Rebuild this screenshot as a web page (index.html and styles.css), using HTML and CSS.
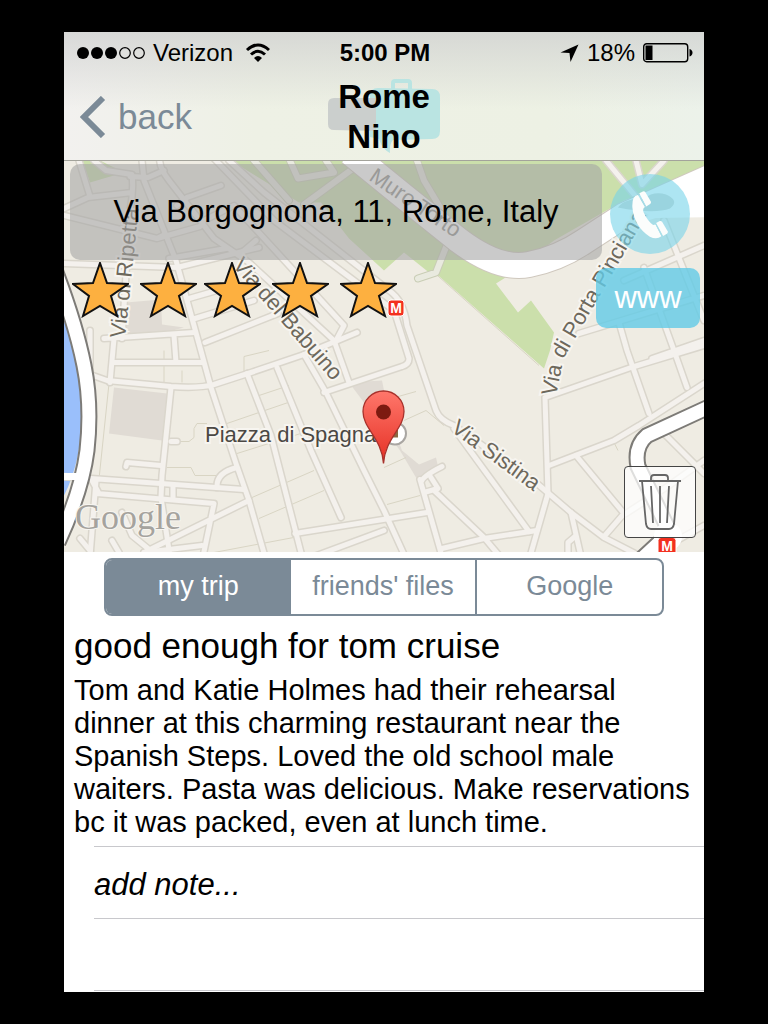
FILE: index.html
```html
<!DOCTYPE html>
<html lang="en">
<head>
    <meta charset="utf-8">
    <meta name="viewport" content="width=device-width, initial-scale=1">
    <title>Rome - Nino</title>
    <link rel="stylesheet" href="styles.css">
</head>
<body>
    <main class="phone">
        <header class="header">
            <div class="status-bar">
                <div class="status-left">
                    <svg width="68" height="14" viewBox="0 0 68 14" aria-hidden="true">
                        <circle cx="6" cy="7" r="6"/>
                        <circle cx="20" cy="7" r="6"/>
                        <circle cx="34" cy="7" r="6"/>
                        <circle cx="48" cy="7" r="5.3" fill="none" stroke="#000" stroke-width="1.2"/>
                        <circle cx="62" cy="7" r="5.3" fill="none" stroke="#000" stroke-width="1.2"/>
                    </svg>
                    <span>Verizon</span>
                    <svg class="wifi" width="26" height="20" viewBox="0 0 26 20" aria-hidden="true">
                        <g fill="none" stroke="#000" stroke-width="3">
                            <path d="M2 7 Q13 -3 24 7"/>
                            <path d="M6 11.5 Q13 5 20 11.5"/>
                        </g>
                        <path d="M9 15 Q13 11 17 15 L13 19 Z"/>
                    </svg>
                </div>
                <time class="clock">5:00 PM</time>
                <div class="status-right">
                    <svg width="19" height="19" viewBox="0 0 19 19" aria-hidden="true">
                        <path d="M18.500 .5 L10.500 18 L9.500 9 L.5 8.500 Z"/>
                    </svg>
                    <span>18%</span>
                    <svg width="50" height="20" viewBox="0 0 50 20" aria-hidden="true">
                        <rect x=".7" y=".7" width="44" height="18" rx="3" fill="none" stroke="#000" stroke-width="1.400"/>
                        <rect x="2.500" y="2.500" width="7" height="14.500"/>
                        <path d="M46.500 6 Q49.500 7 49.500 9.700 Q49.500 12.500 46.500 13.500 Z"/>
                    </svg>
                </div>
            </div>
            <nav class="nav-bar">
                <button type="button" class="back">
                    <svg width="26" height="42" viewBox="0 0 26 42" aria-hidden="true">
                        <path d="M23 2 L4 21 L23 40" fill="none" stroke="#7b8a97" stroke-width="6"/>
                    </svg>
                    back
                </button>
                <h1 class="title">
                    <svg class="title-logo" width="112" height="76" viewBox="0 0 112 76" aria-hidden="true">
                        <path d="M65 12 V4 Q65 2 67 2 H80 Q82 2 82 4 V12" fill="none" stroke="#bae4e2" stroke-width="4"/>
                        <path d="M50 9 L104 10 Q112 10 112 18 V52 Q112 60 104 60 L65 61 Q61 65 62 74 Q54 70 51 60 L42 58 V17 Q42 9 50 9 Z" fill="#bae4e2"/>
                        <path d="M6 19 H48 V52 L6 51 Q0 51 0 45 V25 Q0 19 6 19 Z" fill="#cbcfcd"/>
                    </svg>
                    <span class="title-text">Rome<br>Nino</span>
                </h1>
            </nav>
        </header>

        <section class="map" aria-label="Map">
            <svg class="map-canvas" viewBox="0 0 640 392" preserveAspectRatio="xMidYMid slice">
                <defs>
                    <linearGradient id="pin-fill" x1="0" y1="0" x2="0" y2="1">
                        <stop offset="0" stop-color="#ff776b"/>
                        <stop offset="1" stop-color="#e52f24"/>
                    </linearGradient>
                    <path id="star" d="M28 1 L35 21 L56 22 L39 34 L45 54 L28 44 L11 54 L17 34 L1 22 L21 21 Z"/>
                    <g id="streets">
                        <path d="M0 48 L24 37 L68 32 M15 0 L26 36 M30 0 L42 10 L68 14 Q70 30 66 50 L58 178"/>
                        <path d="M78 0 L80 20 L112 100 L130 165 L147 227 L172 303 L185 340 L201 396"/>
                        <path d="M66 16 L84 17 L100 10 M96 -4 Q94 6 105 20 L150 78 L185 102 L270 180 L285 222"/>
                        <path d="M0 55 L93 78 L101 74 M93 78 L136 66 M0 103 L113 107 L195 87 M123 37 L157 25 M113 45 L123 37"/>
                        <path d="M140 60 L170 45 L280 165 L271 182 M105 98 L162 88 M178 92 L192 80"/>
                        <path d="M165 0 L200 32 L325 130 Q340 140 343 165 L372 250 Q376 260 390 265 L473 323 L507 352 L540 377 L575 395"/>
                        <path d="M150 -2 L210 60 L330 150 L345 198 Q345 204 338 206 L260 232"/>
                        <path d="M40 178 L130 172 M50 178 L46 222 M50 202 L138 202 M110 175 L112 202"/>
                        <path d="M26 170 L26 214 L43 220 L107 226 Q135 228 150 224 L187 212 L240 194 L293 172"/>
                        <path d="M125 138 L160 128 M131 158 L190 140 M141 182 L214 153"/>
                        <path d="M107 227 L98 315 L97 337 L106 396 M109 325 V337 M107 281 H113"/>
                        <path d="M183 213 L207 275 L238 396 M213 207 L247 290 L277 357 M240 194 L262 232 L300 310 L320 350 L341 396"/>
                        <path d="M-2 316 L27 318 L180 329 M33 333 L150 343 L139 396 M185 340 L80 392 M32 320 L26 396 M28 320 L35 333"/>
                        <path d="M62 306 L63 302 L97 305 M153 327 Q152 312 173 307 M55 392 L48 380 M84 388 L68 375 L58 352 M138 385 L80 392 M16 378 L26 390"/>
                        <path d="M231 373 L363 352 M250 396 L320 370"/>
                        <path d="M390 268 L465 371 M481 237 L484 333 L466 396 M481 237 L567 207 L640 185"/>
                        <path d="M485 305 L550 280 L575 265 L640 223 M555 162 L563 190 L585 253 M580 107 L610 190 L623 227"/>
                        <path d="M515 173 L640 135 M560 120 L640 85 M588 198 L640 180 M600 60 L640 160 M542 0 L575 40 M572 0 L578 24 L600 0"/>
                        <path d="M512 295 L560 353 L541 375 M600 273 L640 313 M507 352 L517 396 M562 353 L605 325 L640 300 M604 385 L640 365"/>
                        <path d="M356 319 L378 396 M370 330 L420 377 L436 396 M378 388 L420 378 L473 370 M357 322 Q358 316 378 306 M360 332 L374 328 L367 317"/>
                        <path d="M504 393 V382 L511 376"/>
                    </g>
                    <g id="park-paths">
                        <path d="M190 0 L225 40 M225 -2 L234 18 L270 12 L262 0 M240 44 L300 0 M353 0 L360 20 L390 70 M383 84 L372 112 L354 118"/>
                    </g>
                    <g id="highways">
                        <path d="M-8 112 Q12 165 20 205 Q28 245 23 290 Q18 330 -6 382"/>
                        <path d="M646 246 L583 275 Q570 286 574 306 L606 372 L578 398"/>
                    </g>
                </defs>
                <rect width="640" height="392" fill="#efece3"/>
                <!-- river, parks and blocks -->
                <path d="M0 160 Q15 200 18 250 Q18 300 0 335 Z" fill="#9abffb"/>
                <g fill="#cbdfab">
                    <path d="M18 0 H36 L60 12 L26 22 Z"/>
                    <path d="M167 0 H640 V10 L560 40 L490 80 L440 118 L432 123 L454 152 L467 140 L490 172 L486 190 L480 208 L372 113 L365 112 L340 92 L320 110 L285 78 L257 42 L235 42 Z"/>
                </g>
                <g fill="#e0dbd4">
                    <path d="M62 142 L97 139 L98 164 L120 167 L97 173 L60 175 Z"/>
                    <path d="M50 227 L103 233 L98 280 L45 273 Z"/>
                    <path d="M285 222 L318 220 L325 255 L338 290 L355 304 L372 297 L374 306 L362 318 L352 317 L336 290 Z"/>
                </g>
                <g fill="none" stroke="#d9d5c4">
                    <path d="M100 190 V222 M118 210 V222 M180 212 V196 L205 190 M160 264 L230 240 M173 293 L240 272 M195 235 L225 225 M143 263 H133 L130 268 V277 L125 281 H115 M103 307 H127 L131 315 H152 M188 337 L250 310 M195 358 L260 330 M45 223 L34 328 M320 307 L342 297 M323 344 L356 335 M320 240 L352 231 M340 260 L362 250 L380 265 M550 282 L554 290 M370 112 L475 205 M150 392 L235 376"/>
                </g>
                <!-- streets: casing first, then the road itself -->
                <g fill="none" stroke-linecap="round" stroke-linejoin="round">
                    <use href="#park-paths" stroke="#c9cdb5" stroke-width="8"/>
                    <use href="#park-paths" stroke="#e9eadf" stroke-width="6"/>
                    <use href="#streets" stroke="#dad6cc" stroke-width="8"/>
                    <use href="#streets" stroke="#f4f1ed" stroke-width="5"/>
                </g>
                <path d="M286 -8 L340 36 L395 80 Q435 110 465 104 Q495 98 520 81 L560 55 L650 15" fill="none" stroke="#cfc8be" stroke-width="27"/>
                <path d="M286 -8 L340 36 L395 80 Q435 110 465 104 Q495 98 520 81 L560 55 L650 15 V44 L590 45 L560 55" fill="none" stroke="#fff" stroke-width="25"/>
                <path d="M554 47 Q560 38 580 38 Q590 30 602 34 Q616 40 606 48 Q590 54 554 47 Z" fill="#cfd4cf"/>
                <g fill="none">
                    <use href="#highways" stroke="#7d7b77" stroke-width="17"/>
                    <use href="#highways" stroke="#fff" stroke-width="13"/>
                </g>
                <circle cx="604" cy="376" r="14" fill="#fff"/>
                <path d="M-2 316 H22" stroke="#fff" stroke-width="7"/>
                <!-- street names -->
                <g class="street-name">
                    <text transform="translate(61 178) rotate(-84)">Via di Ripetta</text>
                    <text transform="translate(168 105) rotate(49)">Via del Babuino</text>
                    <text class="highway-name" transform="translate(304 19) rotate(34)">Muro Torto</text>
                    <text transform="translate(492 236) rotate(-79)">Via</text>
                    <text transform="translate(499 199) rotate(-60)">di Porta Pinciana</text>
                    <text transform="translate(386 270) rotate(36)">Via Sistina</text>
                </g>
                <circle cx="331" cy="273" r="11" fill="#fff" stroke="#a9a6a2" stroke-width="2"/>
                <rect x="326" y="268" width="8" height="9" fill="#8a6a43"/>
                <text class="place-name" x="141" y="281">Piazza di Spagna</text>
                <text class="map-brand" x="11" y="368">Google</text>
                <path d="M319.500 303 C318 278 299 268 299 251 A20.500 20.500 0 0 1 340 251 C340 268 321 278 319.500 303 Z" fill="url(#pin-fill)" stroke="#a8322c" stroke-width="1.300"/>
                <circle cx="319.500" cy="251.500" r="7.500" fill="#7d1a10"/>
                <g class="metro">
                    <rect x="594" y="377" width="18" height="18" rx="3"/>
                    <text x="603" y="390">M</text>
                </g>
            </svg>

            <div class="map-overlay">
                <div class="address-row">
                    <address class="address">Via Borgognona, 11, Rome, Italy</address>
                    <button type="button" class="call" aria-label="Call">
                        <svg width="37" height="49" viewBox="98 82 112 148" aria-hidden="true">
                            <g fill="#fbfdfc">
                                <path d="M116 97 L137 133 Q129 138 133 149 Q144 174 162 188 L169 186 L187 222 Q172 234 152 223 Q104 192 99 133 Q98 98 116 97 Z"/>
                                <path d="M120 92 L131 86 Q135 84 138 88 L155 117 Q157 121 153 124 L141 132 Z"/>
                                <path d="M171 182 L182 176 Q186 174 189 178 L206 207 Q208 211 204 214 L192 221 Z"/>
                            </g>
                            <path d="M118 93 L140 134 M169 183 L190 223" stroke="#a9dfea" stroke-width="3"/>
                        </svg>
                    </button>
                </div>
                <div class="rating-row">
                    <div class="stars" role="img" aria-label="5 stars">
                        <svg class="star" width="57" height="56"><use href="#star"/></svg>
                        <svg class="star" width="57" height="56"><use href="#star"/></svg>
                        <svg class="star star-middle" width="57" height="56"><use href="#star"/></svg>
                        <svg class="star" width="57" height="56"><use href="#star"/></svg>
                        <svg class="star" width="57" height="56"><use href="#star"/></svg>
                        <svg class="metro metro-badge" width="18" height="18" viewBox="0 0 18 18">
                            <rect x="1" y="1" width="16" height="16" rx="3"/>
                            <text x="9" y="14">M</text>
                        </svg>
                    </div>
                    <a href="#" class="website">www</a>
                </div>
                <button type="button" class="delete" aria-label="Delete">
                    <svg width="42" height="58" viewBox="0 0 42 58" fill="none" stroke="#666" stroke-width="1.800" aria-hidden="true">
                        <path d="M0 8 H42 M3 8 L7 51 Q8 56 12 56 H30 Q34 56 35 51 L39 8"/>
                        <path d="M12 8 V5 Q12 2 15 2 H26 Q29 2 29 5 V8"/>
                        <path d="M12 13 L14 50 M21 13 V50 M30 13 L28 50"/>
                    </svg>
                </button>
            </div>
        </section>

        <div class="tabs" role="tablist">
            <button type="button" class="tab active" role="tab" aria-selected="true">my trip</button>
            <button type="button" class="tab" role="tab" aria-selected="false">friends' files</button>
            <button type="button" class="tab" role="tab" aria-selected="false">Google</button>
        </div>

        <article class="review">
            <h2 class="review-title">good enough for tom cruise</h2>
            <p class="review-text">Tom and Katie Holmes had their rehearsal dinner at this charming restaurant near the Spanish Steps. Loved the old school male waiters. Pasta was delicious. Make reservations bc it was packed, even at lunch time.</p>
        </article>

        <ul class="notes">
            <li class="note"><input type="text" class="note-input" placeholder="add note..." aria-label="Add note"></li>
            <li class="note"></li>
            <li class="note note-last"></li>
        </ul>
    </main>
</body>
</html>
```
FILE: styles.css
```css
* {
    box-sizing: border-box;
}

body {
    margin: 0;
    padding: 32px 64px;
    min-height: 100vh;
    display: flex;
    background-color: #000;
    color: #000;
    font-family: "Liberation Sans", Arial, sans-serif;
}

button {
    padding: 0;
    border: none;
    background: none;
    font-family: inherit;
    cursor: pointer;
}

.phone {
    flex: 1;
    min-width: 0;
    display: flex;
    flex-direction: column;
    background-color: #fff;
}

/* Header */
.header {
    border-bottom: 1px solid #a3a39b;
    background: linear-gradient(rgba(205, 206, 206, 0.7), rgba(240, 240, 236, 0) 60%),
        linear-gradient(90deg, #f2f1ef, #eef1e5 30%, #edf1e4 75%, #ecf2ea);
}

.status-bar {
    display: grid;
    grid-template-columns: 1fr auto 1fr;
    align-items: center;
    height: 42px;
    padding: 0 11px 0 13px;
    font-size: 24px;
}

.status-left,
.status-right {
    display: flex;
    align-items: center;
    gap: 8px;
}

.wifi {
    margin-left: 4px;
}

.status-right {
    justify-content: flex-end;
}

.clock {
    font-weight: bold;
}

.nav-bar {
    display: grid;
    grid-template-columns: 1fr auto 1fr;
    align-items: center;
    height: 86px;
    padding: 0 16px;
}

.back {
    display: flex;
    align-items: center;
    gap: 12px;
    color: #7b8a97;
    font-size: 35px;
}

.title {
    position: relative;
    margin: 0;
    font-size: 33px;
    line-height: 40px;
    text-align: center;
}

.title-logo {
    position: absolute;
    top: 2px;
    left: 50%;
    transform: translateX(-50%);
}

.title-text {
    position: relative;
}

/* Map */
.map {
    position: relative;
    height: 391px;
    overflow: hidden;
}

.map-canvas {
    display: block;
    width: 100%;
    height: 100%;
}

.street-name {
    fill: #6d685c;
    stroke: #f7f5f0;
    stroke-width: 4px;
    paint-order: stroke;
    font-size: 22px;
}

.highway-name {
    fill: #8d8d89;
    stroke: none;
}

.place-name {
    fill: #4b4844;
    stroke: #f7f5f0;
    stroke-width: 4px;
    paint-order: stroke;
    font-size: 22px;
}

.map-brand {
    fill: #a5a39e;
    stroke: #f7f5f0;
    stroke-width: 2px;
    paint-order: stroke;
    font-family: "Liberation Serif", "Times New Roman", serif;
    font-size: 36px;
}

.metro rect {
    fill: #f3301f;
    stroke: #fff;
    stroke-width: 1px;
}

.metro text {
    fill: #fff;
    font-size: 14px;
    font-weight: bold;
    text-anchor: middle;
}

.map-overlay {
    position: absolute;
    inset: 0;
    display: flex;
    flex-direction: column;
    padding-top: 3px;
}

.address-row {
    display: flex;
    align-items: center;
    gap: 8px;
    padding: 0 14px 0 6px;
}

.address {
    flex: 1;
    padding: 24px 12px;
    border-radius: 10px;
    background-color: rgba(163, 163, 163, 0.58);
    font-size: 31px;
    font-style: normal;
    line-height: 48px;
    text-align: center;
}

.call {
    display: flex;
    align-items: center;
    justify-content: center;
    width: 80px;
    height: 80px;
    margin-top: 4px;
    border-radius: 50%;
    background-color: rgba(118, 211, 234, 0.6);
}

.rating-row {
    display: flex;
    justify-content: space-between;
    padding: 2px 4px 0 8px;
}

.stars {
    position: relative;
    display: flex;
    gap: 11px;
}

.star {
    fill: #fdb040;
    stroke: #111;
    stroke-width: 2px;
}

.star-middle {
    margin-left: -4px;
}

.metro-badge {
    position: absolute;
    right: -8px;
    top: 37px;
}

.website {
    width: 104px;
    margin-top: 6px;
    border-radius: 10px;
    background-color: rgba(98, 203, 230, 0.8);
    color: #fff;
    font-size: 31px;
    line-height: 60px;
    text-align: center;
    text-decoration: none;
}

.delete {
    display: flex;
    align-items: center;
    justify-content: center;
    width: 72px;
    height: 72px;
    margin: auto 8px 14px auto;
    border: 1px solid #444;
    border-radius: 4px;
    background-color: rgba(255, 255, 255, 0.75);
}

/* Tabs */
.tabs {
    display: flex;
    margin: 6px 40px 0;
    border: 2px solid #7b8a97;
    border-radius: 8px;
    overflow: hidden;
}

.tab {
    flex: 1;
    height: 54px;
    padding-bottom: 2px;
    color: #7b8a97;
    font-size: 27px;
}

.tab + .tab {
    border-left: 2px solid #7b8a97;
}

.tab.active {
    background-color: #7b8a97;
    color: #fff;
}

.tab.active + .tab {
    border-left: none;
}

/* Review */
.review {
    padding: 10px 10px 7px;
}

.review-title {
    margin: 0;
    font-size: 35px;
    font-weight: normal;
    line-height: 40px;
}

.review-text {
    margin: 8px 0 0;
    font-size: 29px;
    line-height: 33px;
}

/* Notes */
.notes {
    margin: 0 0 0 30px;
    padding: 0;
    list-style: none;
}

.note {
    height: 72px;
    border-top: 1px solid #c8c8cc;
}

.note-last {
    height: 2px;
}

.note-input {
    width: 100%;
    height: 100%;
    padding: 4px 0 0;
    border: none;
    outline: none;
    background: none;
    font-family: inherit;
    font-size: 31px;
    font-style: italic;
}

.note-input::placeholder {
    color: #000;
    opacity: 1;
}
```
